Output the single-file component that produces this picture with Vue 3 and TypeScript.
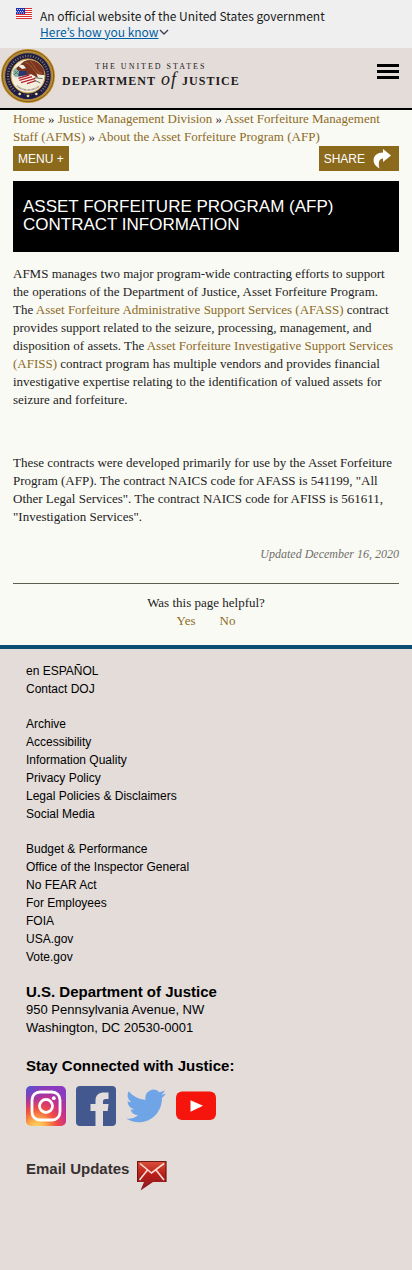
<script setup lang="ts">
interface LinkItem {
  label: string
  href: string
}

const crumbs: LinkItem[] = [
  { label: 'Home', href: '#home' },
  { label: 'Justice Management Division', href: '#jmd' },
  { label: 'Asset Forfeiture Management Staff (AFMS)', href: '#afms' },
  { label: 'About the Asset Forfeiture Program (AFP)', href: '#afp' },
]

const toLinks = (labels: string[]): LinkItem[] =>
  labels.map((label) => ({ label, href: '#' + label.toLowerCase().replace(/[^a-z]+/g, '-') }))

const footerGroups: LinkItem[][] = [
  toLinks(['en ESPAÑOL', 'Contact DOJ']),
  toLinks([
    'Archive',
    'Accessibility',
    'Information Quality',
    'Privacy Policy',
    'Legal Policies & Disclaimers',
    'Social Media',
  ]),
  toLinks([
    'Budget & Performance',
    'Office of the Inspector General',
    'No FEAR Act',
    'For Employees',
    'FOIA',
    'USA.gov',
    'Vote.gov',
  ]),
]

// Star positions on the seal's lower rim
const sealStars: number[][] = [[59, 145], [84, 151], [109, 145]]
</script>

<template>
  <div class="page">
    <section class="gov-banner" aria-label="Official government website">
      <svg class="flag" viewBox="0 0 16 11" aria-hidden="true">
        <rect width="16" height="11" fill="#fff" />
        <path d="M0 .5h16M0 2.5h16M0 4.5h16M0 6.5h16M0 8.5h16M0 10.5h16" stroke="#d9302f" stroke-width="1" />
        <rect width="9" height="6" fill="#1d33b1" />
        <path d="M1 1.5h8M0 3.5h8M1 5h8" stroke="#cdd4f5" stroke-width="1" stroke-dasharray="1 1" />
      </svg>
      <div class="gov-text">
        <p>An official website of the United States government</p>
        <button type="button" class="how">
          <span>Here’s how you know</span>
          <svg viewBox="0 0 10 6" aria-hidden="true">
            <path d="M1 1l4 4 4-4" fill="none" stroke="#3d4551" stroke-width="1.4" />
          </svg>
        </button>
      </div>
    </section>

    <header class="site-header">
      <a href="#home" class="brand" aria-label="The United States Department of Justice">
        <svg class="seal" viewBox="3 10 162 162" aria-hidden="true">
          <circle cx="84" cy="91" r="76" fill="#1d1c45" stroke="#c4912c" stroke-width="10" />
          <circle cx="84" cy="91" r="77" fill="none" stroke="#7d5a22" stroke-width="3" />
          <circle cx="84" cy="91" r="70" fill="none" stroke="#e2bd55" stroke-width="2" />
          <circle cx="84" cy="91" r="60" fill="none" stroke="#8d7760" stroke-width="7" stroke-dasharray="3 5" />
          <path d="M48 135q36 28 72 0l8 9q-44 32-88 0z" fill="#1d1c45" />
          <circle cx="84" cy="91" r="51" fill="#f5eddb" stroke="#c99b35" stroke-width="3" />
          <path d="M40 72q8-9 17-8l7 16-9 15q-11 1-16-8z" fill="#91b8a5" />
          <path d="M42 88l17-17M44 76l15 15" stroke="#47776b" stroke-width="3" />
          <path d="M60 59q10-16 31-16 24 1 40 27l2 18q-15 2-24-7l5 16-17 8-16-8-13-16q-9-8-18-9-2-8 10-13z" fill="#79351f" />
          <path d="M76 50q14 4 22 18t17 18M90 46q11 10 17 23t20 15" stroke="#a35d36" stroke-width="3" fill="none" />
          <path d="M56 62q7-7 15-3l7 9-12 2z" fill="#f4ede3" />
          <path d="M57 76h23v14q-2 12-14 17-11-6-11-17z" fill="#29386e" />
          <path d="M51 94l43-8 21 12-17 18-36-2z" fill="#faf2e8" />
          <path d="M55 98l33-10M58 104l38-11M63 111l43-13M81 114l27-9" stroke="#b6232d" stroke-width="4" />
          <path d="M104 96l24 3M101 102l20 10" stroke="#677b66" stroke-width="3" />
          <path d="M51 121q15 12 33 12t34-12" stroke="#7e7770" stroke-width="5" stroke-dasharray="2 2" fill="none" />
          <circle v-for="star in sealStars" :key="star[0]" :cx="star[0]" :cy="star[1]" r="4" fill="#f2dda0" />
        </svg>
        <span class="wordmark">
          <span class="over">THE UNITED STATES</span>
          <span class="dept"><span>DEPARTMENT</span><i>of</i><span>JUSTICE</span></span>
        </span>
      </a>
      <button type="button" class="burger" aria-label="Open navigation">
        <span></span><span></span><span></span>
      </button>
    </header>

    <main class="content">
      <nav class="crumbs" aria-label="Breadcrumb">
        <template v-for="(crumb, i) in crumbs" :key="crumb.label">
          <template v-if="i > 0">{{ ' ' }}<span>»</span>{{ ' ' }}</template><a :href="crumb.href">{{ crumb.label }}</a>
        </template>
      </nav>
      <div class="toolbar">
        <button type="button" class="tool">MENU +</button>
        <button type="button" class="tool share">
          <span>SHARE</span>
          <svg viewBox="0 0 18 20" aria-hidden="true">
            <path d="M10 0l8 6.500-8 6.500V9.600C6.200 10 5 13 6.400 19.500 2.200 17 .200 14 .600 10.500 1 6.200 4.500 3.600 10 3.400z" fill="#fff" />
          </svg>
        </button>
      </div>

      <h1>ASSET FORFEITURE PROGRAM (AFP) CONTRACT INFORMATION</h1>

      <p class="intro">
        AFMS manages two major program-wide contracting efforts to support the operations of the
        Department of Justice, Asset Forfeiture Program. The
        <a href="#afass">Asset Forfeiture Administrative Support Services (AFASS)</a> contract
        provides support related to the seizure, processing, management, and disposition of assets.
        The <a href="#afiss">Asset Forfeiture Investigative Support Services (AFISS)</a> contract
        program has multiple vendors and provides financial investigative expertise relating to the
        identification of valued assets for seizure and forfeiture.
      </p>
      <p class="codes">
        These contracts were developed primarily for use by the Asset Forfeiture Program (AFP). The
        contract NAICS code for AFASS is 541199, "All Other Legal Services". The contract NAICS code
        for AFISS is 561611, "Investigation Services".
      </p>
      <p class="updated">Updated December 16, 2020</p>

      <section class="feedback">
        <p>Was this page helpful?</p>
        <div class="answers">
          <a href="#yes">Yes</a>
          <a href="#no">No</a>
        </div>
      </section>
    </main>

    <footer class="site-footer">
      <ul v-for="(group, i) in footerGroups" :key="i">
        <li v-for="item in group" :key="item.label">
          <a :href="item.href">{{ item.label }}</a>
        </li>
      </ul>

      <h2>U.S. Department of Justice</h2>
      <address>950 Pennsylvania Avenue, NW<br />Washington, DC 20530-0001</address>

      <h2 class="connect">Stay Connected with Justice:</h2>
      <div class="social">
        <a href="#instagram" aria-label="Instagram">
          <svg viewBox="0 0 40 40" aria-hidden="true">
            <defs>
              <radialGradient id="ig-warm" cx="0.28" cy="1.05" r="1.05">
                <stop offset="0" stop-color="#ffdc6a" />
                <stop offset="0.2" stop-color="#fbb04a" />
                <stop offset="0.45" stop-color="#f3503f" />
                <stop offset="0.7" stop-color="#cb2f86" />
                <stop offset="1" stop-color="#8a3ac0" />
              </radialGradient>
              <radialGradient id="ig-cool" cx="0" cy="0" r="0.6">
                <stop offset="0" stop-color="#4a5ad6" />
                <stop offset="1" stop-color="#7b3cc4" stop-opacity="0" />
              </radialGradient>
            </defs>
            <rect width="40" height="40" rx="5" fill="url(#ig-warm)" />
            <rect width="40" height="40" rx="5" fill="url(#ig-cool)" />
            <g fill="none" stroke="#fff" stroke-width="2.800">
              <rect x="6" y="6" width="28" height="28" rx="8" />
              <circle cx="20" cy="20" r="6.500" />
            </g>
            <circle cx="27.800" cy="12.200" r="1.900" fill="#fff" />
          </svg>
        </a>
        <a href="#facebook" aria-label="Facebook">
          <svg viewBox="0 0 40 40" aria-hidden="true">
            <rect width="40" height="40" rx="4" fill="#43588f" />
            <path d="M19.500 40V25H14.500v-7H19.500v-3.500C19.500 9 23 6.500 28 6.500h4.500v6.500H30c-2.500 0-3 1-3 2.500V18h5.500l-.800 7H27v15z" fill="#e3dedb" />
          </svg>
        </a>
        <a href="#twitter" aria-label="Twitter">
          <svg viewBox="0 0 24 24" aria-hidden="true">
            <path fill="#6fa5e6" d="M23.950 4.570a10 10 0 0 1-2.820.770 4.960 4.960 0 0 0 2.160-2.720c-.950.550-2 .960-3.120 1.180a4.920 4.920 0 0 0-8.380 4.480C7.690 8.090 4.070 6.130 1.640 3.160a4.920 4.920 0 0 0 1.520 6.570 4.900 4.900 0 0 1-2.230-.610v.060a4.920 4.920 0 0 0 3.950 4.830 5 5 0 0 1-2.210.080 4.940 4.940 0 0 0 4.600 3.420A9.870 9.870 0 0 1 0 19.540a13.990 13.990 0 0 0 7.550 2.210c9.050 0 14-7.500 14-13.980l-.020-.640a9.940 9.940 0 0 0 2.420-2.560z" />
          </svg>
        </a>
        <a href="#youtube" aria-label="YouTube">
          <svg viewBox="0 0 40 40" aria-hidden="true">
            <rect y="5.500" width="40" height="28.500" rx="6" fill="#f5150d" />
            <path d="M14.500 14.200l12.500 5.600-12.500 6z" fill="#fff" />
          </svg>
        </a>
      </div>

      <a href="#email" class="email">
        <span>Email Updates</span>
        <svg viewBox="0 0 30 30" aria-hidden="true">
          <defs>
            <linearGradient id="mail-red" x1="0" y1="0" x2="0" y2="1">
              <stop offset="0" stop-color="#d9503b" />
              <stop offset="0.45" stop-color="#b91e18" />
              <stop offset="1" stop-color="#831824" />
            </linearGradient>
          </defs>
          <path d="M.5.500h28.500v20.500H16L3.500 29.500 7 21H.500z" fill="url(#mail-red)" />
          <path d="M.5 21V.500h28.500V21" fill="none" stroke="#701814" stroke-width="1.200" />
          <path d="M3 2.500l11.500 9.500L27 2.500M2.500 19l8-10M27 19l-8-10" fill="none" stroke="#f8dcd2" stroke-width="1.600" />
        </svg>
      </a>
    </footer>
  </div>
</template>

<style>
body {
  margin: 0;
  background: #e3dcd9;
}
</style>

<style scoped>
.page {
  font-family: "Liberation Serif", "Times New Roman", serif;
  font-size: 13px;
  line-height: 18px;
  color: #222;
}

p,
ul,
h1,
h2 {
  margin: 0;
  padding: 0;
}

button {
  margin: 0;
  padding: 0;
  border: 0;
  background: none;
  font: inherit;
  color: inherit;
  cursor: pointer;
}

svg {
  display: block;
  flex: none;
}

.gov-banner {
  display: flex;
  gap: 8px;
  padding: 8px 16px;
  background: #efefef;
  font-family: "Noto Sans CJK KR", sans-serif;
  font-size: 12px;
  line-height: 16px;
  color: #1b1b1b;
}

.flag {
  width: 16px;
  height: 11px;
}

.how {
  display: flex;
  align-items: center;
  gap: 1px;
  color: #005ea2;
}

.how span {
  text-decoration: underline;
}

.how svg {
  width: 10px;
  height: 6px;
}

.site-header {
  display: flex;
  justify-content: space-between;
  align-items: flex-start;
  height: 60px;
  padding-right: 13px;
  background: #e3dcd9;
  border-bottom: 2px solid #000;
}

.brand {
  display: flex;
  gap: 7px;
  padding: 1px;
  color: #1c1a1a;
  text-decoration: none;
}

.seal {
  width: 54px;
  height: 54px;
}

.wordmark {
  display: flex;
  flex-direction: column;
  align-items: center;
  padding-top: 12px;
  white-space: nowrap;
}

.over {
  font-size: 8px;
  line-height: 11px;
  letter-spacing: 2px;
}

.dept {
  display: flex;
  align-items: baseline;
  gap: 5px;
  font-size: 12px;
  line-height: 14px;
  letter-spacing: 1px;
  font-weight: bold;
}

.dept i {
  font-size: 18px;
  font-weight: normal;
}

.burger {
  display: flex;
  flex-direction: column;
  gap: 3px;
  margin-top: 16px;
}

.burger span {
  width: 22px;
  height: 3px;
  background: #000;
}

.content {
  padding: 0 13px 15px;
  background: #fafaf5;
}

.content a {
  color: #8c6a1f;
  text-decoration: none;
}

.toolbar {
  display: flex;
  justify-content: space-between;
  margin-bottom: 10px;
}

.tool {
  display: flex;
  align-items: center;
  height: 25px;
  padding: 0 5px;
  background: #8c6a1c;
  color: #fff;
  font-family: "Liberation Sans", Arial, sans-serif;
  font-size: 12px;
}

.share {
  gap: 8px;
  padding: 0 8px 0 5px;
}

.share svg {
  width: 18px;
  height: 20px;
}

h1 {
  padding: 17px 10px 18px;
  background: #000;
  color: #fff;
  font-family: "Liberation Sans", Arial, sans-serif;
  font-size: 17px;
  font-weight: normal;
  line-height: 18px;
}

.intro {
  margin-top: 13px;
}

.codes {
  margin-top: 45px;
}

.updated {
  margin-top: 19px;
  font-size: 12px;
  font-style: italic;
  text-align: right;
  color: #6e6e6a;
}

.feedback {
  margin-top: 20px;
  padding-top: 10px;
  border-top: 1px solid #5c5c50;
  text-align: center;
}

.answers {
  display: flex;
  justify-content: center;
  gap: 24px;
}

.site-footer {
  padding: 13px 26px 80px;
  border-top: 4px solid #0d4e74;
  background: #e3dcd9;
  color: #000;
  font-family: "Liberation Sans", Arial, sans-serif;
}

.site-footer a {
  color: inherit;
  text-decoration: none;
}

ul {
  margin-bottom: 17px;
  list-style: none;
  font-size: 12px;
}

h2 {
  font-size: 15px;
  line-height: 18px;
}

address {
  font-style: normal;
}

.connect {
  margin-top: 20px;
}

.social {
  display: flex;
  gap: 10px;
  margin-top: 11px;
}

.social svg {
  width: 40px;
  height: 40px;
}

.email {
  display: flex;
  align-items: flex-start;
  gap: 8px;
  margin-top: 35px;
  font-size: 15px;
  font-weight: bold;
  line-height: 16px;
}

.site-footer .email {
  color: #383030;
}

.email svg {
  width: 30px;
  height: 30px;
}
</style>
